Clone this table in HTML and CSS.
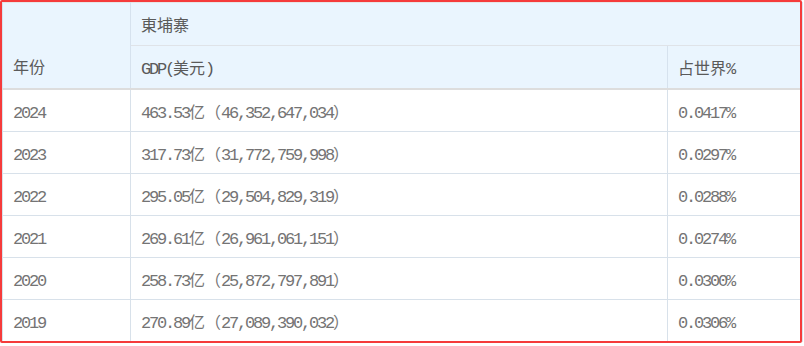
FILE: index.html
```html
<!DOCTYPE html>
<html lang="zh">
<head>
<meta charset="utf-8">
<title>東埔寨 GDP</title>
<link rel="stylesheet" href="styles.css">
</head>
<body>
<div class="frame">
  <table class="gdp">
    <colgroup>
      <col class="c-year">
      <col class="c-gdp">
      <col class="c-pct">
    </colgroup>
    <thead>
      <tr class="h1">
        <th rowspan="2" class="year-h">年份</th>
        <th colspan="2">東埔寨</th>
      </tr>
      <tr class="h2">
        <th><span class="n">GDP(</span>美元<span class="n">)</span></th>
        <th>占世界<span class="n">%</span></th>
      </tr>
    </thead>
    <tbody>
      <tr><td><span class="n">2024</span></td><td><span class="n">463.53</span>亿（<span class="n">46,352,647,034</span>）</td><td><span class="n">0.0417%</span></td></tr>
      <tr><td><span class="n">2023</span></td><td><span class="n">317.73</span>亿（<span class="n">31,772,759,998</span>）</td><td><span class="n">0.0297%</span></td></tr>
      <tr><td><span class="n">2022</span></td><td><span class="n">295.05</span>亿（<span class="n">29,504,829,319</span>）</td><td><span class="n">0.0288%</span></td></tr>
      <tr><td><span class="n">2021</span></td><td><span class="n">269.61</span>亿（<span class="n">26,961,061,151</span>）</td><td><span class="n">0.0274%</span></td></tr>
      <tr><td><span class="n">2020</span></td><td><span class="n">258.73</span>亿（<span class="n">25,872,797,891</span>）</td><td><span class="n">0.0300%</span></td></tr>
      <tr><td><span class="n">2019</span></td><td><span class="n">270.89</span>亿（<span class="n">27,089,390,032</span>）</td><td><span class="n">0.0306%</span></td></tr>
    </tbody>
  </table>
  <div class="highlight"></div>
</div>
</body>
</html>
```

FILE: styles.css
```css
html, body {
  margin: 0;
  padding: 0;
  background: #ffffff;
  overflow: hidden;
}

.frame {
  position: relative;
  padding: 2px 0 0 2px;
  width: 804px;
  height: 346px;
  box-sizing: border-box;
}

.gdp {
  border-collapse: collapse;
  table-layout: fixed;
  width: 800px;
  font-family: "Noto Sans CJK SC", "Liberation Mono", sans-serif;
  font-size: 16px;
  color: #747474;
  border: 1px solid #e6e6e6;
}

.c-year { width: 128px; }
.c-gdp { width: 537px; }
.c-pct { width: 135px; }

.n {
  font-family: "Liberation Mono", monospace;
  font-size: 17px;
  letter-spacing: -2.2px;
}

.gdp th {
  background: #eaf5fe;
  font-weight: normal;
  text-align: left;
  color: #5a5a5a;
  height: 42px;
  padding: 0 10px;
  border-left: 1px solid #d6e2ee;
  border-right: 1px solid #d6e2ee;
}

.gdp .h1 th {
  border-bottom: 1px solid #dfe3e8;
  vertical-align: middle;
}

.gdp .h1 .year-h {
  vertical-align: bottom;
  padding-bottom: 10px;
  border-bottom: 2px solid #dddddd;
}

.gdp .h2 th {
  border-bottom: 2px solid #dddddd;
}

.gdp td {
  height: 41px;
  padding: 0 10px;
  vertical-align: middle;
  white-space: nowrap;
  border: 1px solid #d8e1ea;
}

.highlight {
  position: absolute;
  left: 0;
  top: 0;
  width: 802px;
  height: 343px;
  box-sizing: border-box;
  border: 2px solid #f53b3b;
  border-radius: 2px;
  pointer-events: none;
}
```
